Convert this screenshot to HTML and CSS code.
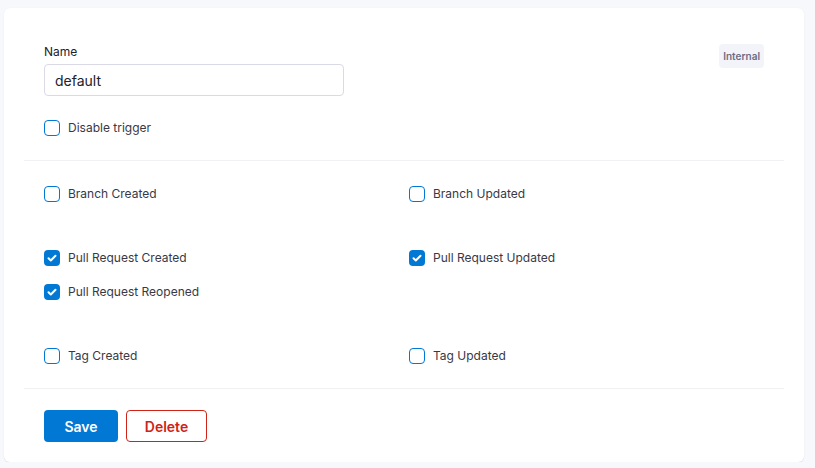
FILE: index.html
```html
<!DOCTYPE html>
<html>
<head>
<meta charset="utf-8">
<link rel="stylesheet" href="styles.css">
</head>
<body>
<div class="card">
  <div class="section top">
    <div class="top-row">
      <div class="field">
        <label class="field-label">Name</label>
        <div class="input">default</div>
      </div>
      <span class="badge">Internal</span>
    </div>
    <div class="check"><span class="box"></span><span class="check-label">Disable trigger</span></div>
  </div>
  <div class="divider"></div>
  <div class="section events">
    <div class="group">
      <div class="check"><span class="box"></span><span class="check-label">Branch Created</span></div>
      <div class="check"><span class="box"></span><span class="check-label">Branch Updated</span></div>
    </div>
    <div class="group">
      <div class="check"><span class="box checked"><svg viewBox="0 0 16 16" width="16" height="16"><path d="M4.5 8.3l2.3 2.2 4.7-4.7" fill="none" stroke="#fff" stroke-width="2" stroke-linecap="round" stroke-linejoin="round"/></svg></span><span class="check-label">Pull Request Created</span></div>
      <div class="check"><span class="box checked"><svg viewBox="0 0 16 16" width="16" height="16"><path d="M4.5 8.3l2.3 2.2 4.7-4.7" fill="none" stroke="#fff" stroke-width="2" stroke-linecap="round" stroke-linejoin="round"/></svg></span><span class="check-label">Pull Request Updated</span></div>
      <div class="check"><span class="box checked"><svg viewBox="0 0 16 16" width="16" height="16"><path d="M4.5 8.3l2.3 2.2 4.7-4.7" fill="none" stroke="#fff" stroke-width="2" stroke-linecap="round" stroke-linejoin="round"/></svg></span><span class="check-label">Pull Request Reopened</span></div>
    </div>
    <div class="group">
      <div class="check"><span class="box"></span><span class="check-label">Tag Created</span></div>
      <div class="check"><span class="box"></span><span class="check-label">Tag Updated</span></div>
    </div>
  </div>
  <div class="divider"></div>
  <div class="section actions">
    <button class="btn primary">Save</button>
    <button class="btn danger">Delete</button>
  </div>
</div>
</body>
</html>
```

FILE: styles.css
```css
* { box-sizing: border-box; }
body {
  margin: 0;
  background: #f7f8fc;
  font-family: Inter, "Noto Sans", sans-serif;
  color: #383946;
}
.card {
  margin: 8px 0 0 4px;
  width: 800px;
  height: 454px;
  background: #fff;
  border-radius: 6px;
  box-shadow: 0 1px 1px rgba(40, 41, 61, 0.08), 0 0 1px rgba(40, 41, 61, 0.06);
  padding: 0 20px;
}
.section { padding: 0 20px; }
.top { padding-top: 36px; padding-bottom: 24px; }
.top-row {
  display: flex;
  justify-content: space-between;
  align-items: flex-start;
  margin-bottom: 24px;
}
.field { display: flex; flex-direction: column; gap: 4px; }
.field-label {
  font-size: 12px;
  line-height: 16px;
  color: #22222a;
}
.input {
  width: 300px;
  height: 32px;
  border: 1px solid #d9dae5;
  border-radius: 4px;
  padding: 1px 10px 0;
  font-size: 14px;
  line-height: 30px;
  color: #22222a;
}
.badge {
  height: 24px;
  line-height: 24px;
  padding: 0 4px;
  border-radius: 4px;
  background: #f3f3fa;
  color: #6b6d85;
  font-size: 10px;
  font-weight: 600;
}
.divider {
  height: 1px;
  background: #f0f0f5;
}
.check {
  display: flex;
  align-items: center;
  gap: 8px;
  height: 16px;
}
.box {
  width: 16px;
  height: 16px;
  border: 1.5px solid #0278d5;
  border-radius: 4px;
  flex: none;
  display: flex;
}
.box.checked {
  background: #0278d5;
  border: none;
}
.check-label {
  font-size: 12px;
  line-height: 16px;
  color: #383946;
}
.events { padding-top: 25px; padding-bottom: 24px; display: flex; flex-direction: column; gap: 48px; }
.group {
  display: grid;
  grid-template-columns: 365px 1fr;
  row-gap: 18px;
}
.actions {
  padding-top: 21px;
  display: flex;
  gap: 8px;
}
.btn {
  height: 32px;
  border-radius: 4px;
  font-family: Inter, "Noto Sans", sans-serif;
  font-size: 14px;
  font-weight: 600;
  cursor: pointer;
}
.primary {
  width: 74px;
  background: #0278d5;
  border: none;
  color: #fff;
}
.danger {
  width: 81px;
  background: #fff;
  border: 1px solid #cf2318;
  color: #cf2318;
}
```
